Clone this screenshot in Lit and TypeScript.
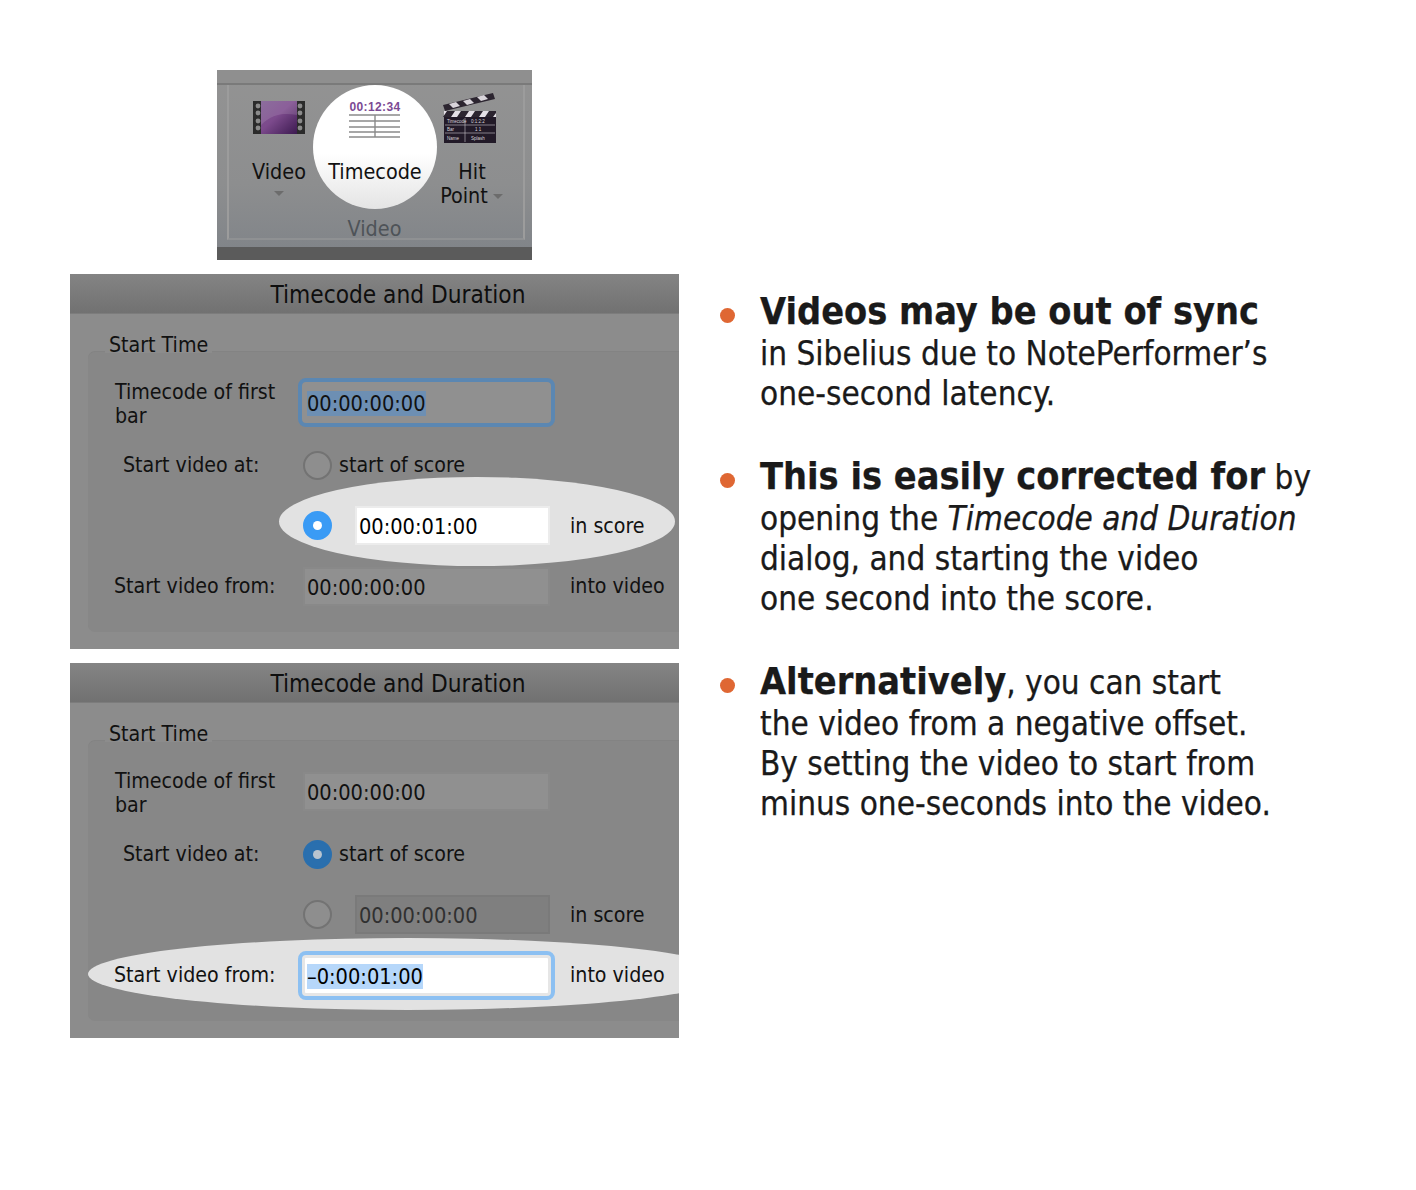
import { LitElement, html, css, svg } from "lit";
import { customElement } from "lit/decorators.js";

@customElement("app-root")
export class AppRoot extends LitElement {
  static styles = css`
    :host { display: block; width: 1416px; height: 1190px; background: #fff; overflow: hidden; font-family: "DejaVu Sans", sans-serif; }
    .page { display: flex; padding: 70px 0 0 70px; }
    .left { width: 609px; display: flex; flex-direction: column; gap: 14px; flex: none; }
    .ribbon { position: relative; width: 315px; height: 190px; margin-left: 147px; background: linear-gradient(#939393, #8d8e8f 60%, #7f8388); display: flex; flex-direction: column; overflow: hidden; }
    .ribbon .topband { height: 13px; background: #8f8f8f; border-bottom: 2px solid #7a7a7a; flex: none; }
    .spot { position: absolute; left: 96px; top: 15px; width: 124px; height: 124px; border-radius: 50%; background: linear-gradient(#ffffff, #ffffff 55%, #e4e4e4); }
    .frame { position: relative; margin: 0 7px 0 10px; height: 155px; box-sizing: border-box; border-left: 2px solid #9c9c9c; border-right: 2px solid #9c9c9c; border-bottom: 2px solid #8f9193; display: flex; flex-direction: column; }
    .tools { display: grid; grid-template-columns: 92px 96px 96px; column-gap: 2px; padding-left: 4px; height: 130px; }
    .tool { display: flex; flex-direction: column; align-items: center; font-size: 21.4px; line-height: 24px; color: #111; font-stretch: condensed; }
    .tool svg { display: block; height: 62px; margin-top: 8px; flex: none; overflow: visible; }
    .tool .lbl { margin-top: 5px; white-space: nowrap; }
    .tool .lbl.hit { margin-right: 2px; }
    .tool .l2 { display: flex; align-items: center; gap: 5px; white-space: nowrap; margin-left: -3px; }
    .caret { width: 0; height: 0; border: 5px solid transparent; border-top: 5px solid #6c6c6c; border-bottom: 0; display: block; }
    .tool .vc { margin-top: 7px; }
    .grouplbl { text-align: center; font-size: 21.4px; line-height: 24px; color: #4e5358; font-stretch: condensed; margin-top: 9px; padding-right: 3px; }
    .bottomband { position: absolute; left: 0; right: 0; bottom: 0; height: 13px; background: #5b5b5b; }

    .dialog { position: relative; width: 609px; height: 375px; background: #8c8c8c; overflow: hidden; color: #111; font-size: 21.2px; font-stretch: condensed; }
    .title { height: 39px; background: linear-gradient(#848484, #717171); border-bottom: 1px solid #7c7c7c; text-align: center; line-height: 43px; font-size: 24.2px; padding-left: 47px; color: #0e0e0e; }
    .legend { position: relative; height: 38px; }
    .legend span { position: absolute; left: 35px; top: 16px; padding: 0 4px; line-height: 30px; height: 23px; background: #8c8c8c; z-index: 1; }
    .group { position: relative; margin-left: 18px; height: 280px; background: #878787; border-radius: 7px 0 0 7px; box-sizing: border-box; padding-top: 22px; box-shadow: 0 -1px 0 #838383; }
    .ell { position: absolute; background: #e2e2e2; border-radius: 50%; }
    .ell.a { left: 191px; top: 125px; width: 396px; height: 89px; }
    .ell.b { left: 0; top: 197px; width: 640px; height: 72px; }
    .row { position: relative; display: grid; grid-template-columns: 210px 272px 1fr; align-items: center; }
    .r1 { height: 56px; } .r2 { height: 70px; } .r3 { height: 51px; } .r4 { height: 70px; }
    .label { padding-left: 26px; line-height: 24px; }
    .r1 .label { padding-top: 4px; padding-left: 27px; }
    .r4 .label { padding-bottom: 1px; }
    .label.ind { padding-left: 35px; }
    .suffix { padding-bottom: 1px; }
    .r4 .suffix { padding-bottom: 2px; }
    .ctl { display: flex; align-items: center; }
    .radio { margin-left: 5px; border: 2px solid #737373; background: #8e8e8e; flex: none; position: relative; width: 25px; height: 25px; border-radius: 50%; }
    .radio.on { background: #3a9bf5; border-color: #3a9bf5; }
    .radio.dim { background: #2a6fae; border-color: #2a6fae; }
    .radio.on::after, .radio.dim::after { content: ""; position: absolute; left: 8px; top: 8px; width: 9px; height: 9px; border-radius: 50%; background: #fff; }
    .radio.dim::after { background: #b9c4cf; }
    .radiotext { margin-left: 7px; margin-bottom: 2px; }
    .field { width: 243px; height: 35px; margin-left: 7px; background: #909090; box-shadow: 0 0 0 2px #898989; line-height: 38px; padding-left: 2px; box-sizing: border-box; white-space: nowrap; font-size: 21.6px; }
    .field.short { width: 191px; margin-left: 25px; padding-left: 2px; }
    .field.white { background: #fff; box-shadow: 0 0 0 2px #ececec; color: #000; }
    .field.disabled { background: #7f7f7f; box-shadow: 0 0 0 2px #7a7a7a; color: #303030; }
    .field.focus { outline: 4px solid #5b87b2; outline-offset: 3px; box-shadow: 0 0 0 3px #909090; background: #909090; border-radius: 1px; }
    .field.focus.bright { outline-color: #8cc0f2; background: #fff; box-shadow: 0 0 0 3px #e6e6e6; color: #000; }
    .sel { background: #6d8fb3; }
    .bright .sel { background: #b6d7fa; }

    .right { margin-left: 81px; padding-top: 220px; width: 640px; color: #1a1a1a; font-size: 33px; line-height: 40px; font-stretch: condensed; -webkit-text-stroke: 0.25px #1a1a1a; }
    .item { position: relative; margin-bottom: 41px; white-space: nowrap; }
    .item::before { content: ""; position: absolute; left: -40px; top: 18px; width: 15px; height: 15px; border-radius: 50%; background: #df6733; }
    .item b { font-size: 37.5px; }
    .line { display: block; }
    .line.first { height: 44px; line-height: 42px; }
  `;

  private filmIcon() {
    return svg`<svg width="52" height="62" viewBox="0 0 52 62">
      <defs><linearGradient id="vg" x1="0" y1="0" x2="1" y2="1"><stop offset="0" stop-color="#7d5a90"/><stop offset="0.45" stop-color="#7c4a8c"/><stop offset="1" stop-color="#3c1a50"/></linearGradient></defs>
      <rect x="0" y="8" width="52" height="33" fill="#2b2b2b"/>
      <rect x="8" y="8" width="36" height="33" fill="url(#vg)"/>
      <path d="M8 32 C20 20 32 20 44 22 L44 8 L8 8 Z" fill="#fff" opacity="0.12"/>
      ${[13, 20, 28, 35].map((y) => svg`<circle cx="5" cy="${y}" r="2.4" fill="#8b8b8b"/><circle cx="47" cy="${y}" r="2.4" fill="#8b8b8b"/>`)}
    </svg>`;
  }
  private timeIcon() {
    return svg`<svg width="54" height="62" viewBox="0 0 54 62">
      <text x="27" y="18" text-anchor="middle" font-family="Liberation Sans, sans-serif" font-weight="700" font-size="12" letter-spacing="0.4" fill="#7b4a94">00:12:34</text>
      <g stroke="#8a8a8a" stroke-width="1.4" fill="none">
        <path d="M1 22H52M1 28H52M1 34H52M1 39H52M1 44H52M27 22V44"/>
      </g>
    </svg>`;
  }
  private clapIcon() {
    return svg`<svg width="54" height="62" viewBox="3 0 54 62">
      <path d="M0 12 L50 0 L52 6 L2 18 Z" fill="#2c2530"/>
      <path d="M6 11 l7 -2 l4 4 l-7 2 Z M20 8 l7 -2 l4 4 l-7 2 Z M34 4 l7 -2 l4 4 l-7 2 Z" fill="#d8d4da"/>
      <rect x="1" y="18" width="52" height="6" fill="#e4e0e6"/>
      <path d="M4 18 h8 l-4 6 h-8Z M18 18 h8 l-4 6 h-8Z M32 18 h8 l-4 6 h-8Z M46 18 h7 v2 l-3 4 h-8Z" fill="#2c2530"/>
      <rect x="1" y="24" width="52" height="26" fill="#221a28"/>
      <path d="M2 32H52M2 40H52M22 25V49" stroke="#c9c5cb" stroke-width="0.6"/>
      <g font-family="Liberation Sans, sans-serif" font-size="4.5" fill="#d8d4da">
        <text x="4" y="30">Timecode</text><text x="28" y="30">0:1:2:2</text>
        <text x="4" y="38">Bar</text><text x="32" y="38">1 1</text>
        <text x="4" y="47">Name</text><text x="28" y="47">Splash</text>
      </g>
    </svg>`;
  }

  private dialog(v: number) {
    const a = v === 1;
    return html`<div class="dialog">
      <div class="title">Timecode and Duration</div>
      <div class="legend"><span>Start Time</span></div>
      <div class="group">
        <div class="ell ${a ? "a" : "b"}"></div>
        <div class="row r1">
          <div class="label">Timecode of first<br />bar</div>
          <div class="ctl">${a
            ? html`<div class="field focus"><span class="sel">00:00:00:00</span></div>`
            : html`<div class="field">00:00:00:00</div>`}</div>
          <div></div>
        </div>
        <div class="row r2">
          <div class="label ind">Start video at:</div>
          <div class="ctl"><div class="radio ${a ? "" : "dim"}"></div><span class="radiotext">start of score</span></div>
          <div></div>
        </div>
        <div class="row r3">
          <div></div>
          <div class="ctl"><div class="radio ${a ? "on" : ""}"></div>
            <div class="field short ${a ? "white" : "disabled"}">${a ? "00:00:01:00" : "00:00:00:00"}</div></div>
          <div class="suffix">in score</div>
        </div>
        <div class="row r4">
          <div class="label">Start video from:</div>
          <div class="ctl">${a
            ? html`<div class="field">00:00:00:00</div>`
            : html`<div class="field focus bright"><span class="sel">–0:00:01:00</span></div>`}</div>
          <div class="suffix">into video</div>
        </div>
      </div>
    </div>`;
  }

  render() {
    return html`<div class="page">
      <div class="left">
        <div class="ribbon">
          <div class="topband"></div>
          <div class="spot"></div>
          <div class="frame">
            <div class="tools">
              <div class="tool">${this.filmIcon()}<span class="lbl">Video</span><span class="caret vc"></span></div>
              <div class="tool">${this.timeIcon()}<span class="lbl">Timecode</span></div>
              <div class="tool">${this.clapIcon()}<span class="lbl hit">Hit</span><span class="l2">Point <span class="caret"></span></span></div>
            </div>
            <div class="grouplbl">Video</div>
          </div>
          <div class="bottomband"></div>
        </div>
        ${this.dialog(1)}
        ${this.dialog(2)}
      </div>
      <div class="right">
        <div class="item"><span class="line first"><b>Videos may be out of sync</b></span><span class="line">in Sibelius due to NotePerformer’s</span><span class="line">one-second latency.</span></div>
        <div class="item"><span class="line first"><b>This is easily corrected for</b> by</span><span class="line">opening the <i>Timecode and Duration</i></span><span class="line">dialog, and starting the video</span><span class="line">one second into the score.</span></div>
        <div class="item"><span class="line first"><b>Alternatively</b>, you can start</span><span class="line">the video from a negative offset.</span><span class="line">By setting the video to start from</span><span class="line">minus one-seconds into the video.</span></div>
      </div>
    </div>`;
  }
}
